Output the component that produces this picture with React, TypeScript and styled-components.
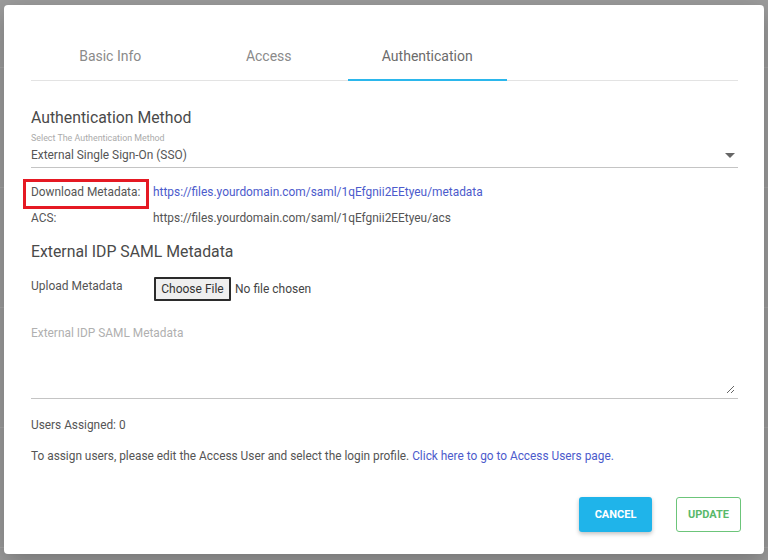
import React from "react";
import styled, { createGlobalStyle } from "styled-components";

const Global = createGlobalStyle`
  html, body { margin: 0; padding: 0; }
  body {
    width: 768px;
    height: 560px;
    overflow: hidden;
    font-family: Roboto, "Liberation Sans", sans-serif;
    background-color: #9c9c9c;
    background-image: repeating-linear-gradient(
      to bottom,
      transparent 0px,
      transparent 67px,
      #a6a6a6 67px,
      #a6a6a6 68px,
      transparent 68px,
      transparent 120px
    );
  }
`;

const Backdrop = styled.div`
  width: 768px;
  height: 560px;
  padding: 5px 4px 6px;
  box-sizing: border-box;
`;

const Dialog = styled.div`
  width: 760px;
  height: 549px;
  background: #fff;
  border-radius: 4px;
  box-sizing: border-box;
  padding: 27px 23px 22px 27px;
  display: flex;
  flex-direction: column;
  color: #555;
  box-shadow: 0 8px 24px rgba(0, 0, 0, 0.25);
`;

const Body = styled.div`
  display: flex;
  flex-direction: column;
  margin-right: 3px;
`;

const TabBar = styled.div`
  display: flex;
  height: 48px;
  border-bottom: 1px solid #e3e3e3;
`;

const Tab = styled.div<{ $active?: boolean }>`
  width: 158.5px;
  display: flex;
  align-items: center;
  justify-content: center;
  font-size: 14px;
  color: ${(p) => (p.$active ? "#6b6b6b" : "#8a8a8a")};
  position: relative;
  padding-bottom: 1px;
  &::after {
    content: "";
    display: ${(p) => (p.$active ? "block" : "none")};
    position: absolute;
    left: 0;
    right: 0;
    bottom: -1px;
    height: 2px;
    background: #2bb7ec;
  }
`;

const Heading = styled.div<{ $mt: number }>`
  margin-top: ${(p) => p.$mt}px;
  font-size: 15.8px;
  line-height: 20px;
  color: #4a4a4a;
`;

const SelectLabel = styled.div`
  margin-top: 4px;
  font-size: 8.9px;
  line-height: 12px;
  color: #ababab;
`;

const SelectBox = styled.div`
  margin-top: 3px;
  display: flex;
  align-items: center;
  justify-content: space-between;
  border-bottom: 1px solid #c4c4c4;
  padding-bottom: 4px;
  font-size: 11.9px;
  line-height: 16px;
  color: #555;
`;

const Caret = styled.span`
  width: 0;
  height: 0;
  border-left: 5px solid transparent;
  border-right: 5px solid transparent;
  border-top: 5px solid #666;
  margin-right: 3px;
`;

const InfoList = styled.div`
  margin-top: 16px;
  display: flex;
  flex-direction: column;
  gap: 10px;
`;

const InfoRow = styled.div`
  display: flex;
  font-size: 11.9px;
  line-height: 16px;
`;

const InfoLabel = styled.span<{ $marked?: boolean }>`
  width: 122px;
  flex: none;
  color: #555;
  position: relative;
  &::after {
    content: "";
    display: ${(p) => (p.$marked ? "block" : "none")};
    position: absolute;
    left: -8px;
    top: -5px;
    width: 126px;
    height: 30px;
    box-sizing: border-box;
    border: 3px solid #e51923;
  }
`;

const Link = styled.a`
  color: #4c5bcc;
  text-decoration: none;
`;

const Plain = styled.span`
  color: #555;
`;

const UploadRow = styled.div`
  margin-top: 15px;
  display: flex;
  align-items: flex-start;
  font-size: 12px;
`;

const UploadLabel = styled.span`
  width: 123px;
  flex: none;
  line-height: 18px;
  color: #555;
`;

const FileInput = styled.input`
  font-family: Roboto, "Liberation Sans", sans-serif;
  font-size: 12px;
  color: #444;
  &::file-selector-button {
    font-family: Roboto, "Liberation Sans", sans-serif;
    font-size: 12px;
    color: #333;
    background: #efefef;
    border: 2px solid #2b2b2b;
    border-radius: 1px;
    height: 24px;
    width: 77px;
    padding: 0;
    margin-right: 4px;
  }
`;

const TextAreaWrap = styled.div`
  margin-top: 18px;
  border-bottom: 1px solid #c4c4c4;
  padding-bottom: 4px;
  display: flex;
`;

const TextArea = styled.textarea`
  height: 75px;
  flex: 1;
  margin-right: 3px;
  box-sizing: border-box;
  border: none;
  outline: none;
  resize: vertical;
  padding: 6px 0 0;
  font-family: Roboto, "Liberation Sans", sans-serif;
  font-size: 11.9px;
  line-height: 16px;
  color: #555;
  &::placeholder {
    color: #b0b0b0;
  }
`;

const Note = styled.div<{ $mt: number }>`
  margin-top: ${(p) => p.$mt}px;
  font-size: 11.85px;
  line-height: 16px;
  color: #555;
`;

const Footer = styled.div`
  margin-top: auto;
  display: flex;
  justify-content: flex-end;
  gap: 24px;
`;

const Button = styled.button<{ $variant: "primary" | "outline" }>`
  height: 35px;
  box-sizing: border-box;
  padding: 0;
  font-family: Roboto, "Liberation Sans", sans-serif;
  font-size: 11px;
  font-weight: 700;
  border-radius: 3px;
  cursor: pointer;
  ${(p) =>
    p.$variant === "primary"
      ? `
    width: 73px;
    background: #1fb4ea;
    color: #fff;
    border: none;
    box-shadow: 0 2px 4px rgba(0,0,0,0.25);
  `
      : `
    width: 65px;
    background: #fff;
    color: #59b96a;
    border: 1px solid #6cc57a;
  `}
`;

export default function App() {
  return (
    <>
      <Global />
      <Backdrop>
        <Dialog>
          <Body>
            <TabBar>
              <Tab>Basic Info</Tab>
              <Tab>Access</Tab>
              <Tab $active>Authentication</Tab>
            </TabBar>

            <Heading $mt={27}>Authentication Method</Heading>
            <SelectLabel>Select The Authentication Method</SelectLabel>
            <SelectBox>
              <span>External Single Sign-On (SSO)</span>
              <Caret />
            </SelectBox>

            <InfoList>
              <InfoRow>
                <InfoLabel $marked>Download Metadata:</InfoLabel>
                <Link href="#">https://files.yourdomain.com/saml/1qEfgnii2EEtyeu/metadata</Link>
              </InfoRow>
              <InfoRow>
                <InfoLabel>ACS:</InfoLabel>
                <Plain>https://files.yourdomain.com/saml/1qEfgnii2EEtyeu/acs</Plain>
              </InfoRow>
            </InfoList>

            <Heading $mt={16}>External IDP SAML Metadata</Heading>
            <UploadRow>
              <UploadLabel>Upload Metadata</UploadLabel>
              <FileInput type="file" />
            </UploadRow>
            <TextAreaWrap>
              <TextArea placeholder="External IDP SAML Metadata" />
            </TextAreaWrap>

            <Note $mt={18}>Users Assigned: 0</Note>
            <Note $mt={15}>
              To assign users, please edit the Access User and select the login profile.{" "}
              <Link href="#">Click here to go to Access Users page.</Link>
            </Note>
          </Body>

          <Footer>
            <Button $variant="primary">CANCEL</Button>
            <Button $variant="outline">UPDATE</Button>
          </Footer>
        </Dialog>
      </Backdrop>
    </>
  );
}
